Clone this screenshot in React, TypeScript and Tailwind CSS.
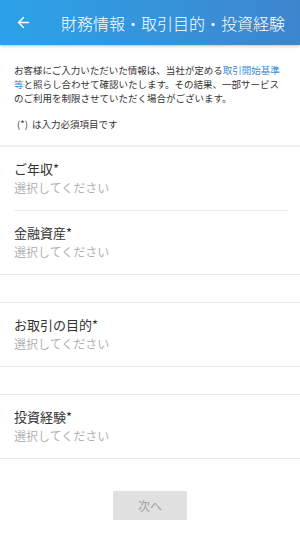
import { ArrowLeft } from 'lucide-react';

const fieldClass = 'pt-[12px] pb-[13px] pl-[14px]';

function Field({ label }: { label: string }) {
  return (
    <div className={fieldClass}>
      <p className="text-[13px] leading-[19px] text-[#333333]">{label}*</p>
      <p className="text-[12px] leading-[19px] text-[#b3b3b3]">選択してください</p>
    </div>
  );
}

export default function App() {
  return (
    <div
      className="min-h-[544px] w-[300px] bg-white"
      style={{ fontFamily: '"Noto Sans CJK JP", "Noto Sans", sans-serif' }}
    >
      {/* Header */}
      <div className="flex h-[45px] items-center bg-gradient-to-r from-[#2aa2e8] to-[#3c86cd] shadow-[0_1px_3px_rgba(0,0,0,0.25)]">
        <div className="flex w-[61px] items-center pl-[15px]">
          <ArrowLeft size={17} strokeWidth={2} className="text-white" />
        </div>
        <h1 className="whitespace-nowrap text-[16px] font-light leading-none text-white">
          財務情報・取引目的・投資経験
        </h1>
      </div>

      {/* Intro */}
      <div className="px-[14px] pt-[18px] pb-[14px]">
        <p className="text-[9.5px] leading-[14px] text-[#333333]">
          お客様にご入力いただいた情報は、当社が定める
          <span className="text-[#3a8ed6]">取引開始基準</span>
          <br />
          <span className="text-[#3a8ed6]">等</span>と照らし合わせて確認いたします。その結果、一部サービス
          <br />
          のご利用を制限させていただく場合がございます。
        </p>
        <p className="mt-[12px] pl-[3px] text-[9.5px] leading-[14px] text-[#333333]">
          (*)&nbsp;&nbsp;は入力必須項目です
        </p>
      </div>
      <div className="h-[2px] bg-[#f0f0f0]" />

      {/* Group 1 */}
      <div className="border-b border-[#e8e8e8]">
        <Field label="ご年収" />
        <div className="ml-[14px] mr-[12px] h-px bg-[#ececec]" />
        <Field label="金融資産" />
      </div>

      <div className="h-[27px]" />

      {/* Group 2 */}
      <div className="border-y border-[#e8e8e8]">
        <Field label="お取引の目的" />
      </div>

      <div className="h-[27px]" />

      {/* Group 3 */}
      <div className="border-y border-[#e8e8e8]">
        <Field label="投資経験" />
      </div>

      {/* Next button */}
      <div className="flex justify-center pt-[32px]">
        <button className="flex h-[29px] w-[74px] items-center justify-center bg-[#e1e1e1] text-[12px] text-[#a0a0a0]">
          次へ
        </button>
      </div>
    </div>
  );
}
